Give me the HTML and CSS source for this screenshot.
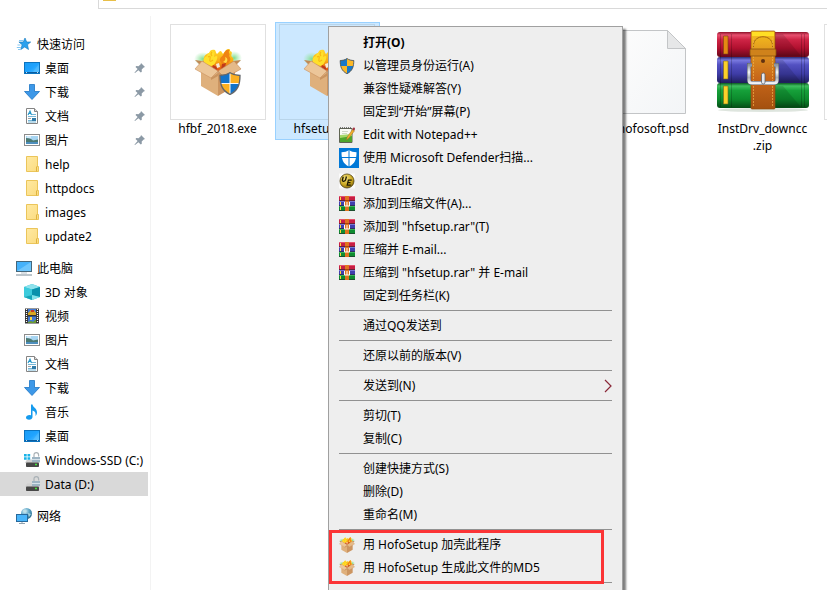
FILE: index.html
```html
<!doctype html>
<html lang="zh-CN">
  <head>
    <meta charset="utf-8">
    <meta name="viewport" content="width=device-width, initial-scale=1">
    <title>Data (D:)</title>
    <link rel="stylesheet" href="styles.css">
  </head>
  <body>
    <svg class="sprite" aria-hidden="true">
      <defs>
        <linearGradient id="g-screen" x1="0" y1="0" x2="1" y2="1">
          <stop offset="0" stop-color="#1a9cf5"/><stop offset=".5" stop-color="#1fa3ff"/><stop offset="1" stop-color="#5cc4ff"/>
        </linearGradient>
        <linearGradient id="g-folder" x1="0" y1="0" x2="1" y2="1">
          <stop offset="0" stop-color="#ffe9a2"/><stop offset="1" stop-color="#fbdc80"/>
        </linearGradient>
        <linearGradient id="g-red" x1="0" y1="0" x2="0" y2="1">
          <stop offset="0" stop-color="#8c1027"/><stop offset=".12" stop-color="#e8506f"/><stop offset=".3" stop-color="#cf2546"/><stop offset=".65" stop-color="#b0102f"/><stop offset="1" stop-color="#65091b"/>
        </linearGradient>
        <linearGradient id="g-blue" x1="0" y1="0" x2="0" y2="1">
          <stop offset="0" stop-color="#2b2b78"/><stop offset=".12" stop-color="#7a7ae0"/><stop offset=".3" stop-color="#5351c2"/><stop offset=".65" stop-color="#3e3ca6"/><stop offset="1" stop-color="#1f1e5c"/>
        </linearGradient>
        <linearGradient id="g-green" x1="0" y1="0" x2="0" y2="1">
          <stop offset="0" stop-color="#0b5a20"/><stop offset=".12" stop-color="#3fbf60"/><stop offset=".3" stop-color="#16a03a"/><stop offset=".65" stop-color="#0c8a2c"/><stop offset="1" stop-color="#054c15"/>
        </linearGradient>
        <linearGradient id="g-strap" x1="0" y1="0" x2="0" y2="1">
          <stop offset="0" stop-color="#f7c21c"/><stop offset=".3" stop-color="#dc9120"/><stop offset=".6" stop-color="#c8671a"/><stop offset="1" stop-color="#a4500f"/>
        </linearGradient>
        <linearGradient id="g-metal" x1="0" y1="0" x2="0" y2="1">
          <stop offset="0" stop-color="#8d939d"/><stop offset=".4" stop-color="#f4f6f8"/><stop offset=".7" stop-color="#aab0ba"/><stop offset="1" stop-color="#f1f3f6"/>
        </linearGradient>
        <linearGradient id="g-flame" x1="0" y1="0" x2="0" y2="1">
          <stop offset="0" stop-color="#ffdc2a"/><stop offset=".55" stop-color="#fbab14"/><stop offset="1" stop-color="#dc4a12"/>
        </linearGradient>
        <linearGradient id="g-page" x1="0" y1="0" x2="1" y2="1">
          <stop offset="0" stop-color="#fcfcfc"/><stop offset="1" stop-color="#f3f5f7"/>
        </linearGradient>
        <radialGradient id="g-haze">
          <stop offset="0" stop-color="#7fdc8a"/><stop offset="1" stop-color="#9ce8a8" stop-opacity="0"/>
        </radialGradient>
        <radialGradient id="g-gold" cx=".4" cy=".3" r=".8">
          <stop offset="0" stop-color="#f3e27c"/><stop offset=".6" stop-color="#c8a51e"/><stop offset="1" stop-color="#6d5508"/>
        </radialGradient>
        <radialGradient id="g-globe" cx=".35" cy=".3" r=".8">
          <stop offset="0" stop-color="#d3edf7"/><stop offset=".5" stop-color="#5ea6c6"/><stop offset="1" stop-color="#1f6487"/>
        </radialGradient>
      </defs>

      <symbol id="i-star" viewBox="0 0 16 16">
        <path d="M9 2l1.700 4h4l-3.200 2.700 1 4.800-3.800-2.500-3.900 2.500 1.300-4.800-3.200-2.700h4.300z" fill="#2ba1ee" stroke="#1277bd" stroke-width=".6"/>
        <path d="M3 4.500h4M1.500 9h3M.8 11.500h4M2 13.500h2.500" stroke="#64b9ef" stroke-width=".8"/>
      </symbol>
      <symbol id="i-desktop" viewBox="0 0 16 16">
        <rect x=".5" y="2.500" width="15" height="11" fill="url(#g-screen)" stroke="#0b73bf"/>
        <path d="M8 13l7-9v9z" fill="#7acdff" opacity=".3"/>
        <path d="M1 12.500h14" stroke="#0a5da0"/>
        <path d="M2 12.500h1m10 0h1" stroke="#fff" stroke-width=".8"/>
      </symbol>
      <symbol id="i-down" viewBox="0 0 16 16">
        <path d="M5.500.5h5v7h5L8 15.500.5 7.500h5z" fill="#3d98e8" stroke="#1d75c4" stroke-width=".8"/>
      </symbol>
      <symbol id="i-doc" viewBox="0 0 16 16">
        <path d="M2.500.5h8l3 3v12h-11z" fill="#fff" stroke="#848484"/>
        <path d="M10.500.5v3h3" fill="#ddd" stroke="#848484"/>
        <path d="M4 7l2-4 1.500 4M5 5.500h2" fill="none" stroke="#2095c8" stroke-width="1.100"/>
        <path d="M8 6.500h4M4 8.500h8M4 12.500h4M4 14h8" stroke="#53a5cd" stroke-width=".8"/>
        <path d="M4 10.500h3" stroke="#888" stroke-width=".8"/>
        <rect x="8" y="10" width="4" height="3" fill="#317ba8"/>
      </symbol>
      <symbol id="i-pic" viewBox="0 0 16 16">
        <rect x=".5" y="2.500" width="15" height="11" fill="#fff" stroke="#8c8c8c"/>
        <rect x="2" y="4" width="12" height="8" fill="#a7d5f2"/>
        <path d="M2 6q5 0 7 2.500l5-1V12H2z" fill="#4b7972"/>
        <path d="M2 10h12v2H2z" fill="#4d8ebd"/>
        <path d="M3 5h4" stroke="#fff"/>
      </symbol>
      <symbol id="i-folder" viewBox="0 0 16 16">
        <path d="M2.500.5h11v10h1v5h-12z" fill="url(#g-folder)" stroke="#ebc55a"/>
        <path d="M12.500 15.500V11l1-1" fill="none" stroke="#dfb33f"/>
      </symbol>
      <symbol id="i-pc" viewBox="0 0 16 16">
        <rect x=".5" y="1.500" width="15" height="10" fill="#45b2fb" stroke="#45677b"/>
        <path d="M1 11L15 2v9z" fill="#8bd4ff" opacity=".6"/>
        <path d="M5 13h6" stroke="#b7c2ca"/><path d="M0 15h16" stroke="#7b8b97"/>
      </symbol>
      <symbol id="i-cube" viewBox="0 0 16 16">
        <path d="M8 0l8 3v10l-8 3-8-3V3z" fill="#24bed1"/>
        <path d="M8 0l8 3-8 2.500L0 3z" fill="#8fe2ec"/>
        <path d="M16 3L8 5.500V11l8 2z" fill="#0991ac"/>
        <path d="M0 3l8 2.500V11l-8 2z" fill="#3ccbdc"/>
        <path d="M8 11l8 2-8 3-8-3z" fill="#82e2ea"/>
        <path d="M8 11v5l-8-3z" fill="#16a5b9"/>
      </symbol>
      <symbol id="i-video" viewBox="0 0 16 16">
        <path d="M1 .5h14v15H1z" fill="#333"/>
        <path d="M2.500 1v14M13.500 1v14" stroke="#fff" stroke-width="1.200" stroke-dasharray="1 1"/>
        <path d="M4 1h8v6H4zM4 8.500h8V15H4z" fill="#4279d4"/>
        <path d="M4 5l3-3 1 2 2-2 2 3v2H4z" fill="#d8a720"/>
        <path d="M7 2h3v2H7z" fill="#c63828"/>
        <path d="M4 14l3-1 2 1 3-3v4H4z" fill="#6a9a31"/><path d="M6 9h2v3H6z" fill="#f5d54a"/>
      </symbol>
      <symbol id="i-music" viewBox="0 0 16 16">
        <path d="M7 .5h1.500c.5 3 4.500 3.500 4.500 8 0 2-1 3-1.500 3.500.5-3-.5-5-3-5.500V13c0 1.500-1.500 2.700-3.500 2.700S2 14.800 2 13.500 3.500 11 5.500 11l1.500.2z" fill="#169bee"/>
      </symbol>
      <symbol id="i-disk" viewBox="0 0 16 16">
        <path d="M3 7.500h11l2 3.500H1z" fill="#d0d0d0"/>
        <rect x="2" y="10.500" width="13" height="4.500" rx=".8" fill="#474747"/>
        <path d="M11 12.500h2" stroke="#42e63d" stroke-width="1.300"/>
        <rect x="8" y="5" width="8" height="5" fill="#9db4c3"/><path d="M8 7.500h8" stroke="#d6e2ea"/>
        <path d="M10 5V3q0-2.300 2.300-2.300T14.600 3v1.500" fill="none" stroke="#a9b1b6" stroke-width="1.200"/>
      </symbol>
      <symbol id="i-windisk" viewBox="0 0 16 16">
        <use href="#i-disk"/>
        <path d="M0 2h6v6H0z" fill="#fff"/>
        <path d="M0 2h2.700v2.500H0zM3.500 2h2.700v2.500H3.500zM0 5.300h2.700v2.500H0zM3.500 5.300h2.700v2.500H3.500z" fill="#19b3e8"/>
      </symbol>
      <symbol id="i-net" viewBox="0 0 16 16">
        <circle cx="10.500" cy="5.500" r="5.500" fill="url(#g-globe)"/>
        <path d="M7 2q3-1 4 1l-2 2-2-1zM12 5l3 1-2 3z" fill="#bfe0e6" opacity=".8"/>
        <rect x=".5" y="6.500" width="11" height="7" fill="#49b5fa" stroke="#28699b"/>
        <path d="M6 14v1M3 15.500h6" stroke="#91a3b0"/>
      </symbol>
      <symbol id="i-pin" viewBox="0 0 12 12">
        <path d="M7 1l4 4-1.300.4-2 2.200.1 2.200-1 .7-2.400-2.300L1 11l-.5.100.3-.8 2.800-3.300L1.500 5l.8-.9 2.200.1 2.200-2z" fill="#8b99a5"/>
      </symbol>
      <symbol id="i-shield" viewBox="0 0 16 16">
        <path d="M8 .5c2 1.500 4.500 2 6.800 2 0 6-1.300 10.500-6.800 13.200C2.500 13 1.200 8.500 1.200 2.500 3.500 2.500 6 2 8 .5z" fill="#fcb827"/>
        <path d="M8 .5c-2 1.500-4.500 2-6.800 2q0 3 .5 5.500H8zM8 8v7.700c3.700-1.800 5.500-4.500 6.300-7.700z" fill="#1878ca"/>
        <path d="M8 .5c2 1.500 4.500 2 6.800 2 0 6-1.300 10.500-6.800 13.200C2.500 13 1.200 8.500 1.200 2.500 3.500 2.500 6 2 8 .5z" fill="none" stroke="#4a5560" stroke-width=".9"/>
      </symbol>
      <symbol id="i-bigshield" viewBox="0 0 22 23">
        <path d="M11 .5c3 2 6.500 2.800 10 2.800 0 9-2 15-10 19.200C3 18.300 1 12.300 1 3.300 4.500 3.300 8 2.500 11 .5z" fill="#1273c9"/>
        <path d="M11 .5c3 2 6.500 2.800 10 2.800q0 4.500-.7 8.200H11zM11 11.500v11C5.500 19.600 2.900 16 1.800 11.500z" fill="#fcb021"/>
        <path d="M11 1v21M1.500 11.500h19" stroke="#f6f8fa"/>
        <path d="M11 .7c3 2 6.500 2.800 10 2.800 0 9-2 15-10 19C3 18.500 1 12.500 1 3.500 4.500 3.500 8 2.700 11 .7z" fill="none" stroke="#63666a" stroke-width="1.300"/>
      </symbol>
      <symbol id="i-box" viewBox="0 0 48 48">
        <ellipse cx="9" cy="11" rx="9" ry="7" fill="url(#g-haze)"/>
        <ellipse cx="40" cy="10" rx="8" ry="7" fill="url(#g-haze)"/>
        <path d="M1 12l7 1 16-4 15 4 8-1-6 6-17 7-17-7z" fill="#c08a56"/>
        <path d="M10 14C9 9 11 6 15 5c1-3 3-4 6-3 1 2 1 3 2 4l3-3c2 0 2 2 3 3l3-4c2-2 5-1 4 1 4 1 0 4 2 6 3 2 1 5-2 8l-11 6h-3z" fill="url(#g-flame)"/>
        <path d="M10 15c-1-4 0-6 3-7 1-4 4-3 5-5 4 1 2 4 2 6 3-2 4-1 3 2s-3 7-6 7z" fill="#ffe02a"/>
        <path d="M14 9q3-2 2 2t3 1M18 4q-2 2 0 4" fill="none" stroke="#f7b813" stroke-width="1.200"/>
        <path d="M26 13c-1-4 3-4 4-8 2-4 5-4 6-3-3 2 1 4-1 6 2 2 2 5-1 7l-5 2z" fill="#ef8414"/>
        <path d="M29 14c2-1 3-3 2-5 3 1 3 4 1 6z" fill="#ffd945"/>
        <path d="M19 17l4 2v4l-5-3zM28 16l4-1-1 4-4 3z" fill="#c03a1b"/>
        <path d="M22 16l3-1 1 4-3 1z" fill="#f8e8d6"/>
        <path d="M7 18l17 7v23L7 38z" fill="#dfb07c"/>
        <path d="M24 25l17-7v20l-17 10z" fill="#cc9561"/>
        <path d="M8 13l16 10-7 7L1 21z" fill="#ecc699" stroke="#c99260" stroke-width=".6"/>
        <path d="M40 13L24 23l7 7 16-9z" fill="#e5ba89" stroke="#c28a56" stroke-width=".6"/>
        <path d="M17 30l7-5v3l-7 4z" fill="#b47843" opacity=".5"/>
      </symbol>
      <symbol id="i-notepad" viewBox="0 0 16 16">
        <path d="M.5 1.500h12.500v14H.5z" fill="#fafbf5" stroke="#5f6552"/>
        <path d="M1 8l12-1v8H1z" fill="#a5d866"/><path d="M1 11l12-2v6H1z" fill="#4fa52c"/>
        <path d="M1 1h12" stroke="#555" stroke-width="1.500" stroke-dasharray="1 1"/>
        <path d="M3 4.500h6M3 6.500h5" stroke="#c4cfb9" stroke-width=".8"/>
        <path d="M7.500 13l.7-3 5.300-7.500 2 1.300L10 11z" fill="#f2ae2b" stroke="#94702f" stroke-width=".5"/>
        <path d="M13.700 2.200l1-1.500 1.200.7-.8 1.800z" fill="#9c1f2f" stroke="#9c1f2f" stroke-width=".6"/>
      </symbol>
      <symbol id="i-defender" viewBox="0 0 20 20">
        <path d="M0 0h20v20H0z" fill="#0078d7"/>
        <path d="M10 2c2 1.500 4.500 2.200 7.500 2.200 0 7-1.500 11.500-7.500 14.300C4 15.700 2.500 11.200 2.500 4.200c3 0 5.500-.7 7.500-2.200z" fill="#fff"/>
        <path d="M10 1v18M2 9.500h16" stroke="#0078d7"/>
      </symbol>
      <symbol id="i-ue" viewBox="0 0 17 16">
        <path d="M0 0h17v16H0z" fill="#fafafa"/>
        <circle cx="8.500" cy="8" r="7.500" fill="url(#g-gold)" stroke="#4a3b0d" stroke-width=".8"/>
        <path d="M4.500 3.500L3.600 7q0 1.500 1.300 1.300Q6.700 8 7 6.800l.9-3.600" fill="none" stroke="#1c1700" stroke-width="1.400"/>
        <path d="M13.500 7H10L8.700 12.500h3.800M9.300 9.700h3" fill="none" stroke="#1c1700" stroke-width="1.300"/>
      </symbol>
      <symbol id="i-rar" viewBox="0 0 16 16">
        <path d="M0 0h16v5H0z" fill="#c71e43"/><path d="M0 5h16v5H0z" fill="#403fae"/><path d="M0 10h16v5H0z" fill="#0f8c30"/>
        <path d="M0 .5h16" stroke="#e4536e"/><path d="M0 5.500h16" stroke="#7776d6"/><path d="M0 10.500h16" stroke="#39b557"/>
        <path d="M0 4.500h16M0 9.500h16M0 14.500h16" stroke="#27252e" opacity=".6"/>
        <path d="M1.500 1v3M1.500 6v3M1.500 11v3" stroke="#ffd63a"/>
        <path d="M6 0h4v15H6z" fill="#e0741f"/>
        <path d="M5.500 6v4h5V6M8 6v4" fill="none" stroke="#fff"/>
        <path d="M6 4.500h4" stroke="#a9450e"/>
      </symbol>
      <symbol id="i-rarbig" viewBox="0 0 94 84">
        <ellipse cx="47" cy="80" rx="45" ry="2" fill="#7d977d" opacity=".25"/>
        <rect x="1" y="2" width="92" height="25" rx="3" fill="url(#g-red)"/>
        <rect x="1" y="27" width="92" height="26" rx="3" fill="url(#g-blue)"/>
        <rect x="1" y="53" width="92" height="25" rx="3" fill="url(#g-green)"/>
        <path d="M59 4h8l18 22H59zM59 30h8l18 22H59zM59 56h8l18 21H59z" opacity=".13"/>
        <path d="M4.500 4v73M15.500 4v73M85.500 4v73M88.500 4v73" stroke="#000" opacity=".2"/>
        <path d="M7.500 6h4.500v18H7.500z" fill="#e58913" stroke="#7a4812" stroke-width=".6"/>
        <path d="M7.500 31h4.500v18H7.500zM7.500 56h4.500v18H7.500z" fill="#fbd02a" stroke="#79671c" stroke-width=".6"/>
        <rect x="35" y="1" width="24" height="78" rx="1" fill="url(#g-strap)" stroke="#8f4d0e" stroke-width=".7"/>
        <path d="M36 2h22v4H36z" fill="#ffdf25"/>
        <path d="M37.500 19v-4C38 4 56 4 56.500 15v4" fill="none" stroke="#a5660f"/>
        <path d="M37.500 8v69M56.500 8v69" stroke="#efb24a" stroke-width=".7" stroke-dasharray="2 1"/>
        <rect x="34" y="19" width="26" height="7" rx="1" fill="#cf821b" stroke="#88500e" stroke-width=".8"/>
        <path d="M36 35h-3v15q0 3 3 3h22q3 0 3-3V35h-3" fill="none" stroke="#515866" stroke-width="4"/>
        <path d="M36 35h-3v15q0 3 3 3h22q3 0 3-3V35h-3" fill="none" stroke="url(#g-metal)" stroke-width="3"/>
        <circle cx="47" cy="31" r="2" fill="#613110"/>
        <rect x="45.500" y="43" width="3.500" height="11" rx="1.700" fill="#e6e9ee" stroke="#59606d" stroke-width=".8"/>
      </symbol>
      <symbol id="i-page" viewBox="0 0 66 86">
        <path d="M.5 1.500h46l18 18v65H.5z" fill="url(#g-page)" stroke="#c3c5c7"/>
        <path d="M46.500 1.500v18h18z" fill="#e6e7e8" stroke="#c3c5c7"/>
      </symbol>
      <symbol id="i-arrow" viewBox="0 0 8 14">
        <path d="M1 1l6 6-6 6" fill="none" stroke="#8a2838" stroke-width="1.200"/>
      </symbol>
    </svg>

    <header class="address"><span class="address-folder"></span></header>

    <div class="explorer">
      <nav class="tree" aria-label="导航窗格">
        <ul class="tree-group">
          <li><a class="node root" href="#"><svg class="icon"><use href="#i-star"/></svg>快速访问</a></li>
          <li><a class="node" href="#"><svg class="icon"><use href="#i-desktop"/></svg>桌面<svg class="pin"><use href="#i-pin"/></svg></a></li>
          <li><a class="node" href="#"><svg class="icon"><use href="#i-down"/></svg>下载<svg class="pin"><use href="#i-pin"/></svg></a></li>
          <li><a class="node" href="#"><svg class="icon"><use href="#i-doc"/></svg>文档<svg class="pin"><use href="#i-pin"/></svg></a></li>
          <li><a class="node" href="#"><svg class="icon"><use href="#i-pic"/></svg>图片<svg class="pin"><use href="#i-pin"/></svg></a></li>
          <li><a class="node" href="#"><svg class="icon"><use href="#i-folder"/></svg>help</a></li>
          <li><a class="node" href="#"><svg class="icon"><use href="#i-folder"/></svg>httpdocs</a></li>
          <li><a class="node" href="#"><svg class="icon"><use href="#i-folder"/></svg>images</a></li>
          <li><a class="node" href="#"><svg class="icon"><use href="#i-folder"/></svg>update2</a></li>
        </ul>
        <ul class="tree-group">
          <li><a class="node root" href="#"><svg class="icon"><use href="#i-pc"/></svg>此电脑</a></li>
          <li><a class="node" href="#"><svg class="icon"><use href="#i-cube"/></svg>3D 对象</a></li>
          <li><a class="node" href="#"><svg class="icon"><use href="#i-video"/></svg>视频</a></li>
          <li><a class="node" href="#"><svg class="icon"><use href="#i-pic"/></svg>图片</a></li>
          <li><a class="node" href="#"><svg class="icon"><use href="#i-doc"/></svg>文档</a></li>
          <li><a class="node" href="#"><svg class="icon"><use href="#i-down"/></svg>下载</a></li>
          <li><a class="node" href="#"><svg class="icon"><use href="#i-music"/></svg>音乐</a></li>
          <li><a class="node" href="#"><svg class="icon"><use href="#i-desktop"/></svg>桌面</a></li>
          <li><a class="node" href="#"><svg class="icon"><use href="#i-windisk"/></svg>Windows-SSD (C:)</a></li>
          <li><a class="node current" href="#"><svg class="icon"><use href="#i-disk"/></svg>Data (D:)</a></li>
        </ul>
        <ul class="tree-group">
          <li><a class="node root" href="#"><svg class="icon"><use href="#i-net"/></svg>网络</a></li>
        </ul>
      </nav>

      <main class="files">
        <a class="file" href="#">
          <span class="thumb framed"><svg class="box"><use href="#i-box"/></svg><svg class="badge"><use href="#i-bigshield"/></svg></span>
          <span class="name">hfbf_2018.exe</span>
        </a>
        <a class="file selected" href="#">
          <span class="thumb framed"><svg class="box"><use href="#i-box"/></svg></span>
          <span class="name">hfsetup.exe</span>
        </a>
        <a class="file psd" href="#">
          <span class="thumb"><svg class="page"><use href="#i-page"/></svg></span>
          <span class="name">hofosoft.psd</span>
        </a>
        <a class="file" href="#">
          <span class="thumb"><svg class="archive"><use href="#i-rarbig"/></svg></span>
          <span class="name">InstDrv_downcc<br>.zip</span>
        </a>
        <a class="file" href="#" aria-label="文件">
          <span class="thumb framed"></span>
        </a>
      </main>
    </div>

    <div class="menu" role="menu">
      <button class="item default" role="menuitem">打开(O)</button>
      <button class="item" role="menuitem"><svg class="icon"><use href="#i-shield"/></svg>以管理员身份运行(A)</button>
      <button class="item" role="menuitem">兼容性疑难解答(Y)</button>
      <button class="item" role="menuitem">固定到“开始”屏幕(P)</button>
      <button class="item" role="menuitem"><svg class="icon"><use href="#i-notepad"/></svg>Edit with Notepad++</button>
      <button class="item" role="menuitem"><svg class="icon large"><use href="#i-defender"/></svg>使用 Microsoft Defender扫描...</button>
      <button class="item" role="menuitem"><svg class="icon"><use href="#i-ue"/></svg>UltraEdit</button>
      <button class="item" role="menuitem"><svg class="icon"><use href="#i-rar"/></svg>添加到压缩文件(A)...</button>
      <button class="item" role="menuitem"><svg class="icon"><use href="#i-rar"/></svg>添加到 "hfsetup.rar"(T)</button>
      <button class="item" role="menuitem"><svg class="icon"><use href="#i-rar"/></svg>压缩并 E-mail...</button>
      <button class="item" role="menuitem"><svg class="icon"><use href="#i-rar"/></svg>压缩到 "hfsetup.rar" 并 E-mail</button>
      <button class="item" role="menuitem">固定到任务栏(K)</button>
      <hr>
      <button class="item" role="menuitem">通过QQ发送到</button>
      <hr>
      <button class="item" role="menuitem">还原以前的版本(V)</button>
      <hr>
      <button class="item" role="menuitem">发送到(N)<svg class="arrow"><use href="#i-arrow"/></svg></button>
      <hr>
      <button class="item" role="menuitem">剪切(T)</button>
      <button class="item" role="menuitem">复制(C)</button>
      <hr>
      <button class="item" role="menuitem">创建快捷方式(S)</button>
      <button class="item" role="menuitem">删除(D)</button>
      <button class="item" role="menuitem">重命名(M)</button>
      <hr>
      <div class="marked">
        <button class="item" role="menuitem"><svg class="icon"><use href="#i-box"/></svg>用 HofoSetup 加壳此程序</button>
        <button class="item" role="menuitem"><svg class="icon"><use href="#i-box"/></svg>用 HofoSetup 生成此文件的MD5</button>
      </div>
      <hr>
    </div>
  </body>
</html>
```
FILE: styles.css
```css
* { box-sizing: border-box; }
html, body { margin: 0; padding: 0; height: 100%; overflow: hidden; }
body {
  display: flex;
  flex-direction: column;
  position: relative;
  background: #fff;
  color: #000;
  font: 12px/17px "Noto Sans", "Noto Sans CJK SC", sans-serif;
}
a { color: inherit; text-decoration: none; }
ul { list-style: none; margin: 0; padding: 0; }
.sprite { position: absolute; width: 0; height: 0; }

.address {
  flex: none;
  height: 9px;
  margin-left: 98px;
  padding-left: 4px;
  border-left: 1px solid #d9d9d9;
  border-bottom: 1px solid #d9d9d9;
}
.address-folder { display: block; width: 13px; height: 1px; background: #e8bf48; }

.explorer { flex: 1; display: flex; min-height: 0; padding-top: 7px; }

/* navigation pane */
.tree {
  flex: none;
  width: 151px;
  padding: 16px 2px 0 0;
  border-right: 1px solid #f3f3f3;
}
.tree-group { margin-bottom: 8px; }
.node {
  display: flex;
  align-items: center;
  gap: 5px;
  height: 24px;
  padding-left: 24px;
  white-space: nowrap;
}
.node.root { padding-left: 16px; }
.node.current { background: #d9d9d9; }
.icon { flex: none; width: 16px; height: 16px; }
.pin { width: 12px; height: 12px; margin-left: auto; margin-right: 2px; }

/* file list */
.files {
  flex: 1;
  min-width: 0;
  display: grid;
  grid-template-columns: repeat(7, 105px);
  gap: 4px;
  align-content: start;
  align-items: start;
  padding: 6px 0 0 15px;
  overflow: hidden;
}
.file {
  display: flex;
  flex-direction: column;
  align-items: center;
  min-height: 118px;
  padding: 1px 2px 1px 0;
  border: 1px solid transparent;
  text-align: center;
}
.file.selected { background: #cce8ff; border-color: #99d1ff; }
.file.psd { grid-column: 5; }
.thumb {
  position: relative;
  display: flex;
  align-items: center;
  justify-content: center;
  width: 96px;
  height: 96px;
}
.thumb.framed { border: 1px solid #e0e0e0; }
.selected .thumb { border-color: #b9d5ea; }
.box { width: 48px; height: 48px; }
.badge { position: absolute; right: 24px; bottom: 24px; width: 22px; height: 23px; }
.page { width: 66px; height: 86px; }
.archive { width: 94px; height: 84px; }

/* context menu */
.menu {
  position: absolute;
  left: 328px;
  top: 26px;
  width: 295px;
  padding: 4px 10px 24px;
  background: #eee;
  border: 1px solid #a0a0a0;
  box-shadow: 3px 3px 2px rgba(0, 0, 0, .5);
}
.item {
  display: grid;
  grid-template-columns: 16px 1fr auto;
  column-gap: 8px;
  align-items: center;
  width: 100%;
  height: 23px;
  padding: 0;
  border: 0;
  background: none;
  color: inherit;
  font: inherit;
  text-align: left;
  white-space: nowrap;
}
.item::before { content: ""; grid-column: 1; grid-row: 1; }
.item .icon { grid-column: 1; grid-row: 1; }
.item .icon.large { width: 20px; height: 20px; }
.item.default { font-weight: bold; }
.item .arrow { width: 8px; height: 14px; }
.menu hr { height: 1px; margin: 3px 0; border: 0; background: #919191; }
.marked { position: relative; }
.marked::after {
  content: "";
  position: absolute;
  inset: -3px 8px -5px -10px;
  border: 3px solid #fb3436;
  pointer-events: none;
}
```
